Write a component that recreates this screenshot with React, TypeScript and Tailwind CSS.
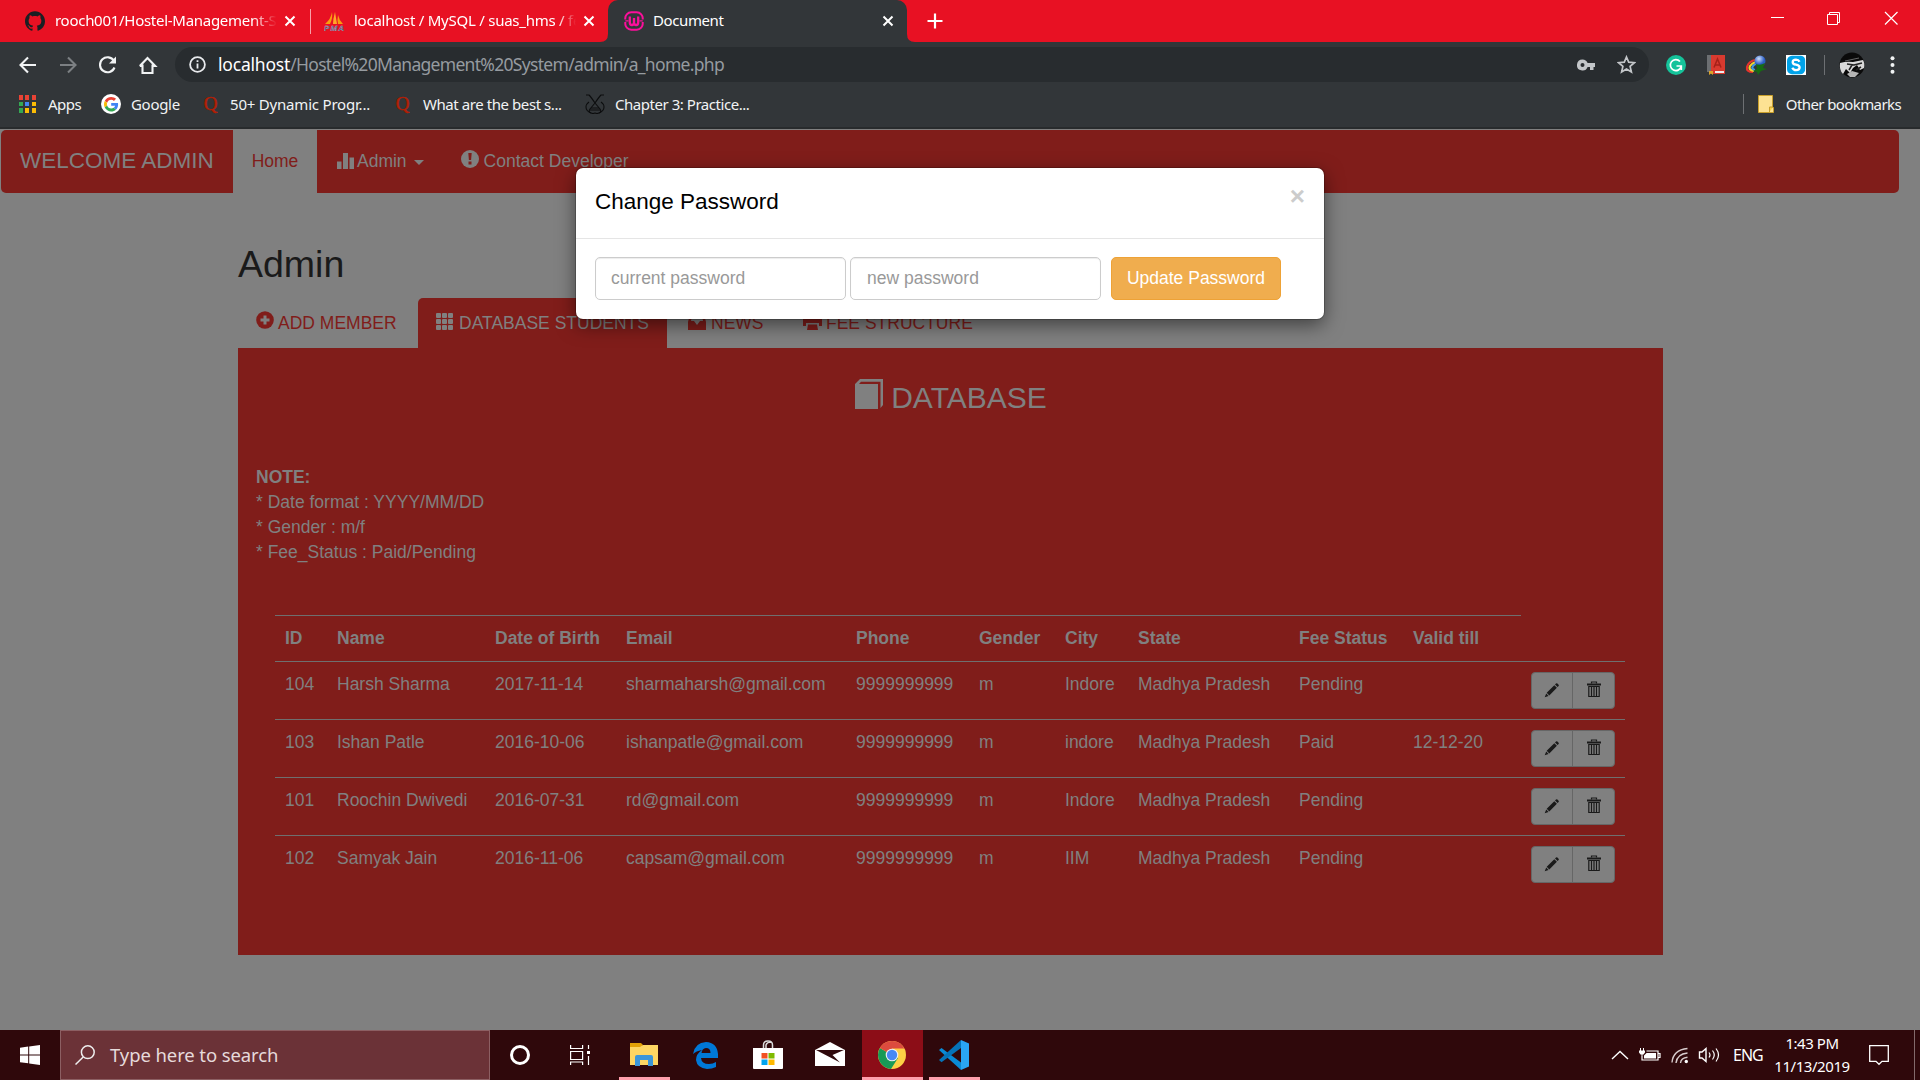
import React from "react";
import { SiGithub } from "react-icons/si";

const rows = [
  ["104", "Harsh Sharma", "2017-11-14", "sharmaharsh@gmail.com", "9999999999", "m", "Indore", "Madhya Pradesh", "Pending", ""],
  ["103", "Ishan Patle", "2016-10-06", "ishanpatle@gmail.com", "9999999999", "m", "indore", "Madhya Pradesh", "Paid", "12-12-20"],
  ["101", "Roochin Dwivedi", "2016-07-31", "rd@gmail.com", "9999999999", "m", "Indore", "Madhya Pradesh", "Pending", ""],
  ["102", "Samyak Jain", "2016-11-06", "capsam@gmail.com", "9999999999", "m", "IIM", "Madhya Pradesh", "Pending", ""],
];
const heads = ["ID", "Name", "Date of Birth", "Email", "Phone", "Gender", "City", "State", "Fee Status", "Valid till"];

function CloseX() {
  return (
    <svg className="h-[12px] w-[12px] shrink-0" viewBox="0 0 12 12" stroke="#fff" strokeWidth="2">
      <path d="M1.5 1.5l9 9M10.5 1.5l-9 9" />
    </svg>
  );
}

function TitleBar() {
  return (
    <div className="flex h-[42px] bg-[#e81123] text-[15px] leading-[40px] text-white">
      <div className="flex w-[310px] items-center pl-[25px] pr-[14px]">
        <SiGithub className="mr-[10px] h-5 w-5 shrink-0 text-[#1b1f23]" />
        <div className="w-[222px] whitespace-nowrap pb-[2px] tracking-[-0.28px] [mask-image:linear-gradient(to_right,black_89%,transparent)]">
          rooch001/Hostel-Management-S
        </div>
        <div className="grow" />
        <CloseX />
      </div>
      <div className="mt-[9px] h-[25px] w-px bg-[#f8a0a8]" />
      <div className="flex w-[297px] items-center rounded-br-[8px] pl-[13px] pr-[13px]">
        <svg className="mr-[10px] h-5 w-5 shrink-0" viewBox="0 0 20 20">
          <path d="M8 1Q9 7 6 13H1Q7 8 8 1Z" fill="#f89c0e" />
          <path d="M11 1Q9 8 9 13h4Q12 7 11 1Z" fill="#ffa629" />
          <path d="M14 4q-1 5 0 9h5Q15 9 14 4Z" fill="#f89c0e" />
          <text x="0" y="19.500" fontSize="8" fontWeight="bold" fontStyle="italic" fontFamily="Liberation Sans" fill="#32406b" stroke="#c8c8d8" strokeWidth=".3" textLength="20">PMA</text>
        </svg>
        <div className="w-[222px] whitespace-nowrap pb-[2px] tracking-[-0.25px] [mask-image:linear-gradient(to_right,black_92%,transparent)]">
          localhost / MySQL / suas_hms / fe
        </div>
        <div className="grow" />
        <CloseX />
      </div>
      <div className="relative flex w-[299px] items-center rounded-t-[10px] bg-[#323639] pl-[16px] pr-[13px]">
        <svg className="absolute -left-[8px] bottom-0 h-[8px] w-[8px]" viewBox="0 0 8 8" fill="#323639"><path d="M8 0v8H0Q8 8 8 0Z" /></svg>
        <svg className="absolute -right-[8px] bottom-0 h-[8px] w-[8px]" viewBox="0 0 8 8" fill="#323639"><path d="M0 0v8h8Q0 8 0 0Z" /></svg>
        <svg className="mr-[9px] h-5 w-5" viewBox="0 0 20 20" fill="none" stroke="#fb0f9b" strokeWidth="2">
          <path d="M1.300 8.500V8a6 6 0 0 1 6-6.700h5.400a6 6 0 0 1 6 6.700v.5M1.300 11v1a6 6 0 0 0 6 6.700h5.400a6 6 0 0 0 6-6.700v-1" />
          <path d="M1.300 9.800h3.200M15.500 9.800h3.200" strokeWidth="1.200" />
          <path d="M5.800 5.500v6q0 2.500 2.100 2.500T10 11.500V7v4.500q0 2.500 2.100 2.500t2.100-2.500v-6" strokeWidth="2.300" />
        </svg>
        <div className="pb-[2px] tracking-[-0.4px]">Document</div>
        <div className="grow" />
        <CloseX />
      </div>
      <svg className="ml-[20px] mt-[13px] h-[16px] w-[16px]" viewBox="0 0 16 16" stroke="#fff" strokeWidth="2.2">
        <path d="M8 .5v15M.5 8h15" />
      </svg>
      <div className="grow" />
      <svg className="mr-[22px] mt-[11px] h-[14px] w-[128px]" viewBox="0 0 128 14" fill="none" stroke="#fff" strokeWidth="1">
        <path d="M1 6.5h13" />
        <path d="M57.500 3.500h10v10h-10zM59.500 3.500v-2h10v10h-2" />
        <path d="M115 1l12.500 12.500M127.500 1l-12.500 12.500" strokeWidth="1.200" />
      </svg>
    </div>
  );
}

function Toolbar() {
  return (
    <div className="flex h-[43px] items-center bg-[#323639] pt-[2px]">
      <svg className="ml-[18px] h-[20px] w-[142px] shrink-0" viewBox="0 0 142 20" fill="none" stroke="#f1f3f4" strokeWidth="2.100">
        <path d="M18 10H3M10 2.500L2.500 10l7.500 7.500" />
        <path d="M42 10h15M50 2.500l7.500 7.500-7.500 7.500" stroke="#7c8083" />
        <path d="M96 6a7.500 7.500 0 1 0 .5 6.500" />
        <path d="M98 1.500v7h-7z" fill="#f1f3f4" stroke="none" />
        <path d="M124.500 9.500v8.500h10V9.500M121.800 11l7.700-8 7.700 8h-3M121.800 11h3" />
      </svg>
      <div className="ml-[15px] flex h-[35px] w-[1474px] shrink-0 items-center rounded-full bg-[#282c2f] pl-[14px] pr-[13px]">
        <svg className="mr-[12px] h-[17px] w-[17px]" viewBox="0 0 17 17" fill="none" stroke="#e8eaed" strokeWidth="1.800">
          <circle cx="8.500" cy="8.500" r="7.400" />
          <path d="M8.500 7.500v5M8.500 4.300v1.800" />
        </svg>
        <div className="text-[17.5px] leading-[35px] text-[#969ba0]">
          <span className="tracking-[-0.2px] text-white">localhost</span><span className="tracking-[-0.69px]">/Hostel%20Management%20System/admin/a_home.php</span>
        </div>
        <div className="grow" />
        <svg className="h-[12px] w-[18px]" viewBox="0 0 18 12" fill="#c3c6c9">
          <path fillRule="evenodd" d="M5.500.500A5.500 5.500 0 1 0 10.600 8H13v3h3.500V8H18V4h-7.400A5.500 5.500 0 0 0 5.500.500ZM5.500 4a2 2 0 1 1 0 4 2 2 0 0 1 0-4Z" />
        </svg>
        <svg className="ml-[22px] h-[19px] w-[19px]" viewBox="0 0 19 19" fill="none" stroke="#c3c6c9" strokeWidth="1.700">
          <path d="M9.500 2l2.200 5.200 5.700.5-4.300 3.700 1.300 5.600-4.900-3-4.900 3 1.300-5.600L1.600 7.700l5.700-.5z" />
        </svg>
      </div>
      <svg className="ml-[17px] h-[20px] w-[20px]" viewBox="0 0 20 20">
        <circle cx="10" cy="10" r="10" fill="#15c39a" />
        <path d="M14 6.500A5.500 5.500 0 1 0 15.200 11.500M10.500 11h4.800v4" fill="none" stroke="#fff" strokeWidth="1.700" />
      </svg>
      <svg className="ml-[21px] h-[20px] w-[18px]" viewBox="0 0 18 20">
        <path d="M0 0h5v17H0z" fill="#6c6f72" />
        <path d="M4 0h14v19H4z" fill="#d93a2f" />
        <path d="M8 16h9v2H8z" fill="#eee" />
        <path d="M7 12.500L10.500 4l3.500 8.500M8 10h5" fill="none" stroke="#a52119" strokeWidth="1.500" />
        <path d="M2 16h4v4l-2-1.500L2 20z" fill="#dba52a" />
      </svg>
      <svg className="ml-[20px] h-[20px] w-[22px]" viewBox="0 0 22 20">
        <defs>
          <radialGradient id="globe" cx=".4" cy=".3"><stop stopColor="#cfe0fa" /><stop offset="1" stopColor="#2a5cc4" /></radialGradient>
        </defs>
        <path d="M8 17Q1 17 2 12 4 6 10 5" fill="none" stroke="#e8322c" strokeWidth="2.200" />
        <path d="M9 16Q3 15 5 11 7 8 11 7" fill="none" stroke="#f7d62c" strokeWidth="2.200" />
        <path d="M10 15Q6 14 8 11 9 9 12 9" fill="none" stroke="#3e9be0" strokeWidth="2.200" />
        <circle cx="15" cy="6" r="5.500" fill="url(#globe)" />
        <path d="M11 9q4 2 9-1l-2 5 4 1-6 2-3 4-1-3-4-1 4-2z" fill="#176b14" />
      </svg>
      <svg className="ml-[19px] h-[20px] w-[20px]" viewBox="0 0 20 20">
        <path d="M0 0h20v20H0z" fill="#fff" />
        <path d="M6 .8h9a5 5 0 0 1 4.200 5V14a5 5 0 0 1-5 5.200H6a5 5 0 0 1-5-5V6a5 5 0 0 1 5-5.200Z" fill="#00a2e8" />
        <path d="M13.500 6.800Q12.500 4.700 10 4.700 6.700 4.800 6.700 7.200q0 2 3.300 2.500 3.600.6 3.600 2.900 0 2.500-3.500 2.600-2.700 0-3.800-2.400" fill="none" stroke="#fff" strokeWidth="2.300" />
      </svg>
      <div className="ml-[18px] h-5 w-px bg-[#6d7073]" />
      <svg className="ml-[14px] h-[26px] w-[26px]" viewBox="0 0 26 26">
        <circle cx="13" cy="13" r="12.500" fill="#0a0a0a" />
        <path d="M1 11q7-2 13-1l10-2q2 3 1 8l-4 2-3-5-4 3-3 5-4-4-3 5Q0 18 1 11Z" fill="#d9d9d9" />
        <path d="M8 12l7 1 8-2M13 13l-3 5M17 18l5-3" stroke="#222" strokeWidth="1.500" fill="none" />
        <path d="M8 22l5-3 7 2-4 4h-5z" fill="#b5b5b5" />
        <path d="M6 9l14-3" stroke="#666" />
      </svg>
      <svg className="ml-[25px] h-[18px] w-[5px]" viewBox="0 0 5 18" fill="#f1f3f4">
        <circle cx="2.500" cy="2.200" r="2" /><circle cx="2.500" cy="9" r="2" /><circle cx="2.500" cy="15.800" r="2" />
      </svg>
    </div>
  );
}

function Quora() {
  return <div className="w-[15px] text-center font-['Liberation_Serif',serif] text-[19px] leading-[20px] text-[#b21f05] [-webkit-text-stroke:0.5px_#b21f05]">Q</div>;
}

function Bookmarks() {
  const dots = ["#e94335", "#e94335", "#e94335", "#34a853", "#4285f4", "#fbbc05", "#34a853", "#fbbc05", "#fbbc05"];
  return (
    <div className="flex h-[44px] items-center border-b-[2px] border-[#282b2d] bg-[#323639] pb-[4px] text-[15px] leading-[20px] text-[#f1f3f4]">
      <div className="ml-[19px] grid w-[17px] grid-cols-3 gap-[2px]">
        {dots.map((c, i) => <div key={i} className="h-[4.500px] w-[4px]" style={{ background: c }} />)}
      </div>
      <div className="ml-[12px] w-[53px] tracking-[-0.5px]">Apps</div>
      <svg className="h-[20px] w-[20px] shrink-0" viewBox="0 0 20 20">
        <circle cx="10" cy="10" r="10" fill="#fff" />
        <g transform="translate(3 3) scale(.3)">
          <path fill="#EA4335" d="M24 9.500c3.500 0 6.700 1.200 9.200 3.600l6.900-6.900C35.900 2.400 30.500 0 24 0 14.600 0 6.500 5.400 2.600 13.200l8 6.200C12.400 13.700 17.700 9.500 24 9.500z" />
          <path fill="#4285F4" d="M47 24.600c0-1.600-.2-3.100-.4-4.600H24v9h12.900c-.6 3-2.300 5.500-4.800 7.200l7.700 6C44.400 38 47 31.800 47 24.600z" />
          <path fill="#FBBC05" d="M10.500 28.600c-.5-1.500-.8-3-.8-4.600s.3-3.100.8-4.600l-8-6.200C.9 16.500 0 20.100 0 24s.9 7.500 2.600 10.800z" />
          <path fill="#34A853" d="M24 48c6.500 0 11.900-2.100 15.900-5.800l-7.700-6c-2.200 1.500-4.900 2.300-8.200 2.300-6.300 0-11.600-4.200-13.500-9.900l-8 6.200C6.500 42.600 14.600 48 24 48z" />
        </g>
      </svg>
      <div className="ml-[10px] w-[72px] tracking-[-0.3px]">Google</div>
      <Quora />
      <div className="ml-[12px] w-[165px] tracking-[-0.2px]">50+ Dynamic Progr...</div>
      <Quora />
      <div className="ml-[13px] w-[162px] tracking-[-0.43px]">What are the best s...</div>
      <svg className="h-[20px] w-[20px] shrink-0" viewBox="0 0 20 20" fill="none" stroke="#0c0d0e" strokeWidth="1.100">
        <path d="M1 1h3q2 2 6 8l5 6q2 3-1 4-2 1-4 0-2 1-4 0-3-1-1-4l5-6q4-6 6-8h3" />
        <path d="M4 8q-3 2-3 5 0 4 5 6M16 8q3 2 3 5 0 4-5 6M6 14h8M5 16h10" />
      </svg>
      <div className="ml-[10px] tracking-[-0.46px]">Chapter 3: Practice...</div>
      <div className="grow" />
      <div className="h-5 w-px bg-[#6d7073]" />
      <svg className="ml-[14px] h-[18px] w-[16px]" viewBox="0 0 16 18">
        <path d="M.5.500h14v12h1v5H.5z" fill="#fde293" stroke="#c9a02c" />
        <path d="M11.500 17v-5h3.500" fill="#f9d145" stroke="#c9a02c" />
      </svg>
      <div className="ml-[12px] mr-[19px] tracking-[-0.6px]">Other bookmarks</div>
    </div>
  );
}

function Pencil() {
  return (
    <svg className="h-[16px] w-[16px]" viewBox="0 0 16 16" fill="#1a1a1a">
      <path d="M10.300 3.200l2.600 2.600-7.600 7.600-2.600-2.600zM11 2.500l1-1q.7-.7 1.400 0l1.200 1.200q.6.700 0 1.300l-1 1zM2.200 11.500l2.400 2.400-3.900 1.400z" />
    </svg>
  );
}

function Trash() {
  return (
    <svg className="h-[17px] w-[14px]" viewBox="0 0 14 17" fill="none" stroke="#1a1a1a">
      <path d="M0 3.500h14" strokeWidth="2" />
      <path d="M4.500 2.500V1h5v1.500" strokeWidth="1.200" />
      <path d="M1.800 5.500v10h10.400v-10zM4.500 6v9M7 6v9M9.500 6v9" strokeWidth="1.200" />
    </svg>
  );
}

function NavBar() {
  return (
    <div className="ml-px mt-px flex h-[63px] w-[1898px] items-center rounded-[5px] bg-[#801d1a] text-[#808080]">
      <div className="w-[232px] pb-[2px] pl-[19px] text-[22.5px]">WELCOME ADMIN</div>
      <div className="flex h-[63px] w-[84px] items-center justify-center bg-[#808080] text-[#801d1a]">Home</div>
      <svg className="ml-[20px] mb-[3px] h-[17px] w-[17px]" viewBox="0 0 17 17" fill="#808080">
        <path d="M0 9.500h4.500V17H0zM6 1h5v16H6zM12.500 5.500H17V17h-4.500z" />
      </svg>
      <div className="ml-[3px]">Admin</div>
      <div className="ml-[7px] mt-[2px] h-0 w-0 border-x-[5px] border-t-[5px] border-x-transparent border-t-[#808080]" />
      <svg className="ml-[37px] mb-[5px] h-[18px] w-[18px]" viewBox="0 0 18 18">
        <circle cx="9" cy="9" r="9" fill="#808080" />
        <path d="M7.300 3h3.400l-.6 7H7.900zM7.500 11.500h3v3h-3z" fill="#801d1a" />
      </svg>
      <div className="ml-[5px]">Contact Developer</div>
    </div>
  );
}

function Tabs() {
  return (
    <div className="flex h-[50px] pb-[2px] leading-[48px] text-[#801d1a]">
      <div className="flex w-[180px] items-center pl-[18px]">
        <svg className="mb-[5px] mr-[4px] h-[18px] w-[18px]" viewBox="0 0 18 18">
          <circle cx="9" cy="9" r="8.800" fill="#801d1a" />
          <path d="M9 4.500v9M4.500 9h9" stroke="#808080" strokeWidth="3" />
        </svg>
        <span className="pt-px">ADD MEMBER</span>
      </div>
      <div className="-mb-[2px] flex w-[249px] items-center rounded-t-[5px] bg-[#801d1a] pb-[2px] pl-[18px] text-[#808080]">
        <div className="mb-[2px] mr-[6px] grid w-[17px] grid-cols-3 gap-[1px]">
          {Array.from({ length: 9 }, (_, i) => <div key={i} className="h-[5px] rounded-[1px] bg-[#808080]" />)}
        </div>
        <span className="pt-px">DATABASE STUDENTS</span>
      </div>
      <div className="ml-[21px] flex w-[115px] items-center">
        <svg className="mb-[1px] mr-[5px] h-[17px] w-[18px]" viewBox="0 0 18 17">
          <path d="M2 1h14l2 8v8H0V9z" fill="#801d1a" />
          <path d="M3 8h3l3 4 3-4h3L14 3H4z" fill="#808080" />
        </svg>
        <span className="pt-px">NEWS</span>
      </div>
      <div className="flex items-center">
        <svg className="mb-[1px] mr-[4px] h-[17px] w-[19px]" viewBox="0 0 19 17" fill="#801d1a">
          <path d="M4 0h11v4H4zM0 5h19v8h-3v-3H3v3H0zM5 11.500h9L15 17H4z" />
        </svg>
        <span className="pt-px">FEE STRUCTURE</span>
      </div>
    </div>
  );
}

function Database() {
  return (
    <div className="h-[607px] bg-[#801d1a] pl-[18px] text-[#808080]">
      <div className="flex h-[72px] items-end justify-center pb-[5px] pr-[17px] text-[30px] leading-[34px]">
        <svg className="mb-[6px] mr-[8px] h-[30px] w-[28px]" viewBox="0 0 28 30" fill="#808080">
          <path d="M0 5h23v25H0zM0 5l5-5h23v26l-2.500 3V2.800H6L4 5z" />
        </svg>
        DATABASE
      </div>
      <div className="mt-[45px] leading-[25px]">
        <b>NOTE:</b>
        <div>* Date format : YYYY/MM/DD</div>
        <div>* Gender : m/f</div>
        <div>* Fee_Status : Paid/Pending</div>
      </div>
      <table className="ml-[19px] mt-[50px] w-[1350px] table-fixed border-collapse whitespace-nowrap text-left leading-[25px]">
        <colgroup>
          <col className="w-[52px]" /><col className="w-[158px]" /><col className="w-[131px]" /><col className="w-[230px]" />
          <col className="w-[123px]" /><col className="w-[86px]" /><col className="w-[73px]" /><col className="w-[161px]" />
          <col className="w-[114px]" /><col className="w-[118px]" /><col className="w-[104px]" />
        </colgroup>
        <thead>
          <tr className="h-[46px]">
            {heads.map((h) => <th key={h} className="border-t border-[#6f6f6f] pl-[10px] align-middle">{h}</th>)}
          </tr>
        </thead>
        <tbody>
          {rows.map((r) => (
            <tr key={r[0]} className="h-[58px] border-t border-[#6f6f6f]">
              {r.map((c, i) => <td key={i} className="pl-[10px] pt-[10px] align-top">{c}</td>)}
              <td className="pl-[10px] pt-[10px] align-top">
                <div className="flex h-[37px] w-[84px] rounded-[4px] border border-[#666] bg-[#808080]">
                  <div className="flex w-[41px] items-center justify-center border-r border-[#666] pb-[2px]"><Pencil /></div>
                  <div className="flex w-[42px] items-center justify-center pb-[3px] pl-[1px]"><Trash /></div>
                </div>
              </td>
            </tr>
          ))}
        </tbody>
      </table>
    </div>
  );
}

function Modal() {
  return (
    <div className="absolute left-[576px] top-[39px] h-[151px] w-[748px] rounded-[7px] bg-white text-black shadow-[0_6px_19px_rgba(0,0,0,0.5),0_0_0_1px_rgba(0,0,0,0.2)]">
      <div className="flex h-[71px] justify-between border-b border-[#e5e5e5] px-[19px]">
        <div className="pt-[18px] text-[22.5px] leading-[32px]">Change Password</div>
        <div className="pt-[15px] text-[26px] font-bold leading-[26px] text-[#ccc]">×</div>
      </div>
      <div className="flex pl-[19px] pt-[18px] leading-[41px]">
        <div className="h-[43px] w-[251px] rounded-[5px] border border-[#ccc] pl-[15px] text-[#999] shadow-[inset_0_1px_1px_rgba(0,0,0,0.075)]">current password</div>
        <div className="ml-[4px] h-[43px] w-[251px] rounded-[5px] border border-[#ccc] pl-[16px] text-[#999] shadow-[inset_0_1px_1px_rgba(0,0,0,0.075)]">new password</div>
        <div className="ml-[10px] h-[43px] w-[170px] rounded-[5px] border border-[#eea236] bg-[#f0ad4e] text-center text-white">Update Password</div>
      </div>
    </div>
  );
}

function Taskbar() {
  return (
    <div className="flex h-[50px] bg-[#2f080b] text-white">
      <div className="flex w-[60px] items-center justify-center">
        <svg className="h-5 w-5" viewBox="0 0 20 20" fill="#fff"><path d="M0 2.800L8.200 1.600v7.800H0zM9.200 1.400L20 0v9.400H9.200zM0 10.400h8.200v7.900L0 17.200zM9.200 10.400H20V20L9.200 18.500z" /></svg>
      </div>
      <div className="flex w-[430px] items-center border border-[#8c5f63] bg-[#6b3237] pl-[14px] text-[18.500px] text-[#e6dadb]">
        <svg className="mb-[1px] mr-[15px] h-5 w-5" viewBox="0 0 20 20" fill="none" stroke="#eee" strokeWidth="1.500"><circle cx="12.800" cy="7.200" r="6.400" /><path d="M8.200 12L.5 19.500" /></svg>
        <div className="tracking-[-0.1px]">Type here to search</div>
      </div>
      <div className="flex w-[60px] items-center justify-center">
        <div className="h-[20px] w-[20px] rounded-full border-[3px] border-white" />
      </div>
      <div className="flex w-[69px] items-center pl-[20px]">
        <svg className="h-5 w-5" viewBox="0 0 20 20" fill="none" stroke="#fff" strokeWidth="1.200"><path d="M.6 0v3.500h12V0M.6 6.500h12v8H.6zM.6 20v-3h12v3M18.500 0v4M18.500 11v9" /><path d="M17 6h3v3h-3z" fill="#fff" stroke="none" /></svg>
      </div>
      <div className="flex w-[51px] justify-center border-b-[3px] border-[#ff9fac] pr-[1px] pt-[13px]">
        <svg className="h-[24px] w-[28px]" viewBox="0 0 28 24">
          <path d="M0 0h11l2 2-2 3H0z" fill="#e2a106" />
          <path d="M0 4h10l3-2h15v20H0z" fill="#fdd663" />
          <path d="M5 23v-9q0-2 2-2h14q2 0 2 2v9h-5v-6h-8v6z" fill="#3b96d9" />
        </svg>
      </div>
      <div className="flex w-[73px] items-center pl-[23px]">
        <svg className="h-[27px] w-[25px]" viewBox="0 0 25 27" fill="#0078d7">
          <path d="M0 12Q2 .5 13 0q11 .5 12 12v4H8q.5 6 8 6 4 0 7-2v5q-4 2-9 2-10-1-11-9 0-6 6-10Q3 9 0 12Zm8.500-1h9q0-5-4.500-5-4 .5-4.500 5Z" />
        </svg>
      </div>
      <div className="flex w-[50px] items-center justify-center">
        <svg className="mb-[1px] h-[30px] w-[30px]" viewBox="0 0 30 30">
          <path d="M10.500 8V5q0-4 4.500-4t4.500 4v3M13 8V5q1-3 5-3" fill="none" stroke="#ddd" strokeWidth="1.500" />
          <path d="M0 8h30v20q0 1-1 1H1q-1 0-1-1z" fill="#fff" />
          <path d="M8.500 13h6v5.500h-6z" fill="#f25022" /><path d="M15.500 13h6v5.500h-6z" fill="#7fba00" />
          <path d="M8.500 19.500h6V25h-6z" fill="#00a4ef" /><path d="M15.500 19.500h6V25h-6z" fill="#ffb900" />
        </svg>
      </div>
      <div className="flex w-[69px] items-center justify-center pl-[5px]">
        <svg className="mb-[2px] h-[24px] w-[30px]" viewBox="0 0 30 24" fill="#fff">
          <path d="M0 8L15 0l15 8v16H0z" />
          <path d="M1 8h28l-11.500 5 7.500 7.500z" fill="#2f080b" />
        </svg>
      </div>
      <div className="flex w-[61px] justify-center border-b-[3px] border-[#ff9fac] bg-[#8c0d17] pr-[1px] pt-[11px]">
        <svg className="h-[28px] w-[28px]" viewBox="0 0 28 28">
          <circle cx="14" cy="14" r="14" fill="#fdcf45" />
          <path d="M14 14L1.900 7A14 14 0 0 0 13 28l7-11z" fill="#189a56" />
          <path d="M14 14L1.900 7A14 14 0 0 1 26.400 7.500H14z" fill="#dc4b3e" />
          <circle cx="14" cy="14" r="6.300" fill="#f1f1f1" /><circle cx="14" cy="14" r="5.200" fill="#4889f4" />
        </svg>
      </div>
      <div className="ml-[6px] flex w-[51px] justify-center border-b-[3px] border-[#ff9fac] pr-[1px] pt-[10px]">
        <svg className="h-[30px] w-[30px]" viewBox="0 0 30 30">
          <path d="M0 10l2.500-2L22 22.500V30z" fill="#0a8ad6" />
          <path d="M0 20l2.500 2.200L22 8V0z" fill="#0673b8" />
          <path d="M22 0l8 3.500v23L22 30z" fill="#2aa5f4" />
        </svg>
      </div>
      <div className="grow" />
      <svg className="mt-[14px] h-[22px] w-[110px]" viewBox="0 0 110 22" fill="none" stroke="#fff" strokeWidth="1.400">
        <path d="M1 15l8-7.500 8 7.500" />
        <path d="M35.500 7H47v9H31v-4M47.500 9.500h1.500v4h-1.500" strokeWidth="1.200" />
        <path d="M29.500 4v3M32.500 4v3M31 10v2" strokeWidth="1" />
        <path d="M28 6.500h6v2l-1.500 2h-3l-1.500-2zM35.500 9H45v5.500H33v-3z" fill="#fff" stroke="none" />
        <path d="M61 18.500Q62 6 76.500 4.500M65 19Q66 10 76.500 9M69.500 19Q70 14 76.500 13.300" stroke="#d8cccd" />
        <circle cx="75.300" cy="17.500" r="1.700" fill="#fff" stroke="none" />
        <path d="M88.500 8h2.500l4-3.500v13L91 14h-2.500z" />
        <path d="M98 8.500q2 2.500 0 5M101.500 6.500q3.500 4.500 0 9M105 4.500q5 6.500 0 13" strokeWidth="1.200" />
      </svg>
      <div className="ml-[12px] w-[39px] text-[16px] leading-[51px] tracking-[-1px]">ENG</div>
      <div className="w-[80px] pt-[2px] text-center text-[15px] leading-[23px] tracking-[-0.45px]">1:43 PM<br />11/13/2019</div>
      <svg className="ml-[17px] mr-[25px] mt-[15px] h-[21px] w-[20px]" viewBox="0 0 20 21" fill="none" stroke="#fff" strokeWidth="1.300"><path d="M.7.700h18.600v15.600h-6.300l-3 3-3-3H.7z" /></svg>
      <div className="mr-[5px] w-px bg-[#83696b]" />
    </div>
  );
}

export default function App() {
  return (
    <div className="h-[1080px] w-[1920px] overflow-hidden font-['Noto_Sans','Open_Sans',sans-serif]">
      <TitleBar />
      <Toolbar />
      <Bookmarks />
      <main className="relative flex h-[901px] flex-col bg-[#808080] font-['Liberation_Sans',Arial,sans-serif] text-[17.5px] leading-[25px]">
        <NavBar />
        <div className="ml-[238px] w-[1425px]">
          <div className="h-[105px] pt-[51px] text-[37.5px] leading-[41px] text-[#1a1a1a]">Admin</div>
          <Tabs />
          <Database />
        </div>
        <Modal />
      </main>
      <Taskbar />
    </div>
  );
}
